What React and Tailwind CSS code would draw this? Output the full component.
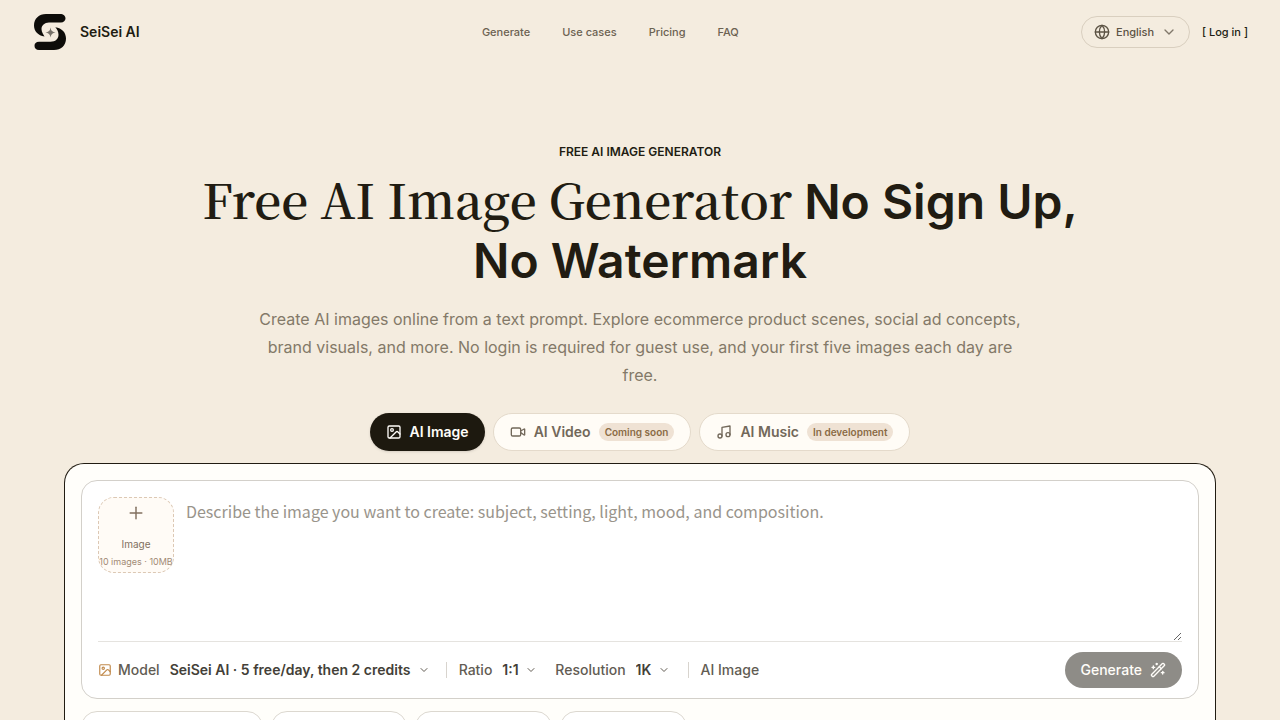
import React from 'react';
import { ChevronDown, Globe, Image, Music, Plus, Video, WandSparkles } from 'lucide-react';

const navLinks = [
  { label: 'Generate', href: '#generate' },
  { label: 'Use cases', href: '#use-cases' },
  { label: 'Pricing', href: '#pricing' },
  { label: 'FAQ', href: '#faq' },
];

const modes = [
  { label: 'AI Image', icon: Image, active: true },
  { label: 'AI Video', icon: Video, badge: 'Coming soon' },
  { label: 'AI Music', icon: Music, badge: 'In development' },
];

const presets = ['w-[182px]', 'w-[136px]', 'w-[137px]', 'w-[127px]'];

const Logo = () => (
  <svg className="h-9 w-9" viewBox="0 0 36 36" aria-hidden="true">
    <path
      d="M14 0H28C31.500 0 33.500 2 33.500 4.500C33.500 6.800 31.500 8.500 29 8.500H17C12.500 8.500 9.500 11.500 9.500 15C9.500 18.500 11.500 20.500 12.500 22.500C6 21.500 2 17 2 11.500C2 4.500 7 0 14 0Z"
      fill="#0d0c09"
    />
    <path
      d="M22 36H7C4 36 2.500 34 2.500 31.700C2.500 29.500 4 27.800 7 27.800H18.500C23.500 27.800 26.500 25 26.500 20.800C26.500 17.500 25 15.200 23.300 13.200C30 14.200 34 18.500 34 24.500C34 31.500 29 36 22 36Z"
      fill="#0d0c09"
    />
    <path d="M18.500 13.500Q19 18 23.500 18.500Q19 19 18.500 23.500Q18 19 13.500 18.500Q18 18 18.500 13.500Z" fill="#77726a" />
  </svg>
);

const Header = () => (
  <header className="flex h-16 items-center justify-between px-8">
    <a href="#home" className="flex items-center gap-3 text-sm font-semibold">
      <Logo />
      SeiSei AI
    </a>

    <nav className="flex items-center gap-8 text-[11px] font-medium text-[#6c6252]">
      {navLinks.map((link) => (
        <a key={link.label} href={link.href}>
          {link.label}
        </a>
      ))}
    </nav>

    <div className="flex items-center gap-3 text-[11px] font-medium">
      <label className="flex h-8 items-center gap-[6px] rounded-full border border-[#d9cfbf] px-3 text-[#5c5344]">
        <Globe className="h-4 w-4" />
        <select aria-label="Language" className="appearance-none bg-transparent">
          <option>English</option>
        </select>
        <ChevronDown className="h-4 w-4 text-[#81786a]" />
      </label>
      <a href="#login">[ Log in ]</a>
    </div>
  </header>
);

const ModeTab = ({ mode }) => {
  const Icon = mode.icon;
  return (
    <button
      type="button"
      className={
        mode.active
          ? 'flex h-[38px] items-center gap-2 rounded-full bg-[#1d190f] px-4 text-[#fffdf9] shadow-sm'
          : 'flex h-[38px] items-center gap-2 rounded-full border border-[#e4dacb] bg-[#fffcf6] px-4 text-[#72685a]'
      }
    >
      <Icon className="h-4 w-4" />
      <span className="text-sm font-semibold">{mode.label}</span>
      {mode.badge && (
        <span className="rounded-full bg-[#efe2d4] px-[6px] py-[2px] text-[10px] leading-[14px] font-semibold text-[#8a6b45]">
          {mode.badge}
        </span>
      )}
    </button>
  );
};

const OptionSelect = ({ label, value, icon }) => (
  <label className="flex items-center">
    {icon}
    <span>{label}</span>
    <select className="ml-[10px] appearance-none bg-transparent font-semibold text-[#443f38]">
      <option>{value}</option>
    </select>
    <ChevronDown className="ml-[6px] h-3 w-3" />
  </label>
);

const PromptBox = () => (
  <form className="rounded-2xl border border-[#d3d0ca] bg-white px-4 pt-4 pb-[10px]">
    <div className="flex gap-3 border-b border-[#e5e3df]">
      <button
        type="button"
        className="flex h-[76px] w-[76px] shrink-0 flex-col items-center rounded-2xl border border-dashed border-[#dcc8b4] bg-[#fffbf6] pt-[5px] whitespace-nowrap text-[#82705f]"
      >
        <Plus className="h-5 w-5" strokeWidth={1.75} />
        <span className="mt-3 text-[10px] leading-[18px]">Image</span>
        <span className="text-[9px] leading-[18px] text-[#a18a75]">10 images · 10MB</span>
      </button>
      <textarea
        aria-label="Prompt"
        placeholder="Describe the image you want to create: subject, setting, light, mood, and composition."
        className="block h-36 flex-1 resize-y bg-transparent font-['Noto_Sans_CJK_SC',sans-serif] text-base leading-7 outline-none placeholder:text-[#99948b]"
      />
    </div>

    <div className="flex items-center justify-between pt-[10px]">
      <div className="flex items-center text-sm font-medium text-[#625c53]">
        <OptionSelect
          label="Model"
          value="SeiSei AI · 5 free/day, then 2 credits"
          icon={<Image className="mr-[6px] h-[14px] w-[14px] text-[#c18a4c]" />}
        />
        <span className="mr-3 ml-4 h-4 w-px bg-[#d8d4ce]" />
        <OptionSelect label="Ratio" value="1:1" />
        <span className="w-[18px]" />
        <OptionSelect label="Resolution" value="1K" />
        <span className="mr-3 ml-[18px] h-4 w-px bg-[#d8d4ce]" />
        <span>AI Image</span>
      </div>
      <button
        type="submit"
        disabled
        className="flex h-9 items-center gap-2 rounded-full bg-[#8e8c87] px-4 text-sm font-medium text-[#fffdf9]"
      >
        Generate
        <WandSparkles className="h-4 w-4" />
      </button>
    </div>
  </form>
);

const App = () => (
  <div className="min-h-screen bg-[#f4ecdf] font-['Inter',sans-serif] text-[#211c12]">
    <Header />

    <main className="px-16 pt-20">
      <section className="flex flex-col items-center text-center">
        <p className="text-xs leading-4 font-semibold uppercase">Free AI Image Generator</p>
        <h1 className="mt-3 max-w-[896px] text-5xl leading-[59px] font-semibold">
          <span className="font-['Noto_Serif_CJK_SC','Noto_Serif','Liberation_Serif',serif] leading-none">
            Free AI Image Generator
          </span>{' '}
          No Sign Up, No Watermark
        </h1>
        <p className="mt-[15px] max-w-[768px] text-base leading-7 text-[#837968]">
          Create AI images online from a text prompt. Explore ecommerce product scenes, social ad concepts, brand
          visuals, and more. No login is required for guest use, and your first five images each day are free.
        </p>
        <div className="mt-6 flex gap-2">
          {modes.map((mode) => (
            <ModeTab key={mode.label} mode={mode} />
          ))}
        </div>
      </section>

      <section className="mt-3 rounded-t-[20px] border border-b-0 border-[#211c12] bg-[#fffefa] p-4">
        <PromptBox />
        <div className="mt-3 flex gap-2">
          {presets.map((width, i) => (
            <button
              key={i}
              type="button"
              aria-label={`Preset ${i + 1}`}
              className={`h-10 rounded-2xl border border-[#dcd8d0] bg-white ${width}`}
            />
          ))}
        </div>
      </section>
    </main>
  </div>
);

export default App;
